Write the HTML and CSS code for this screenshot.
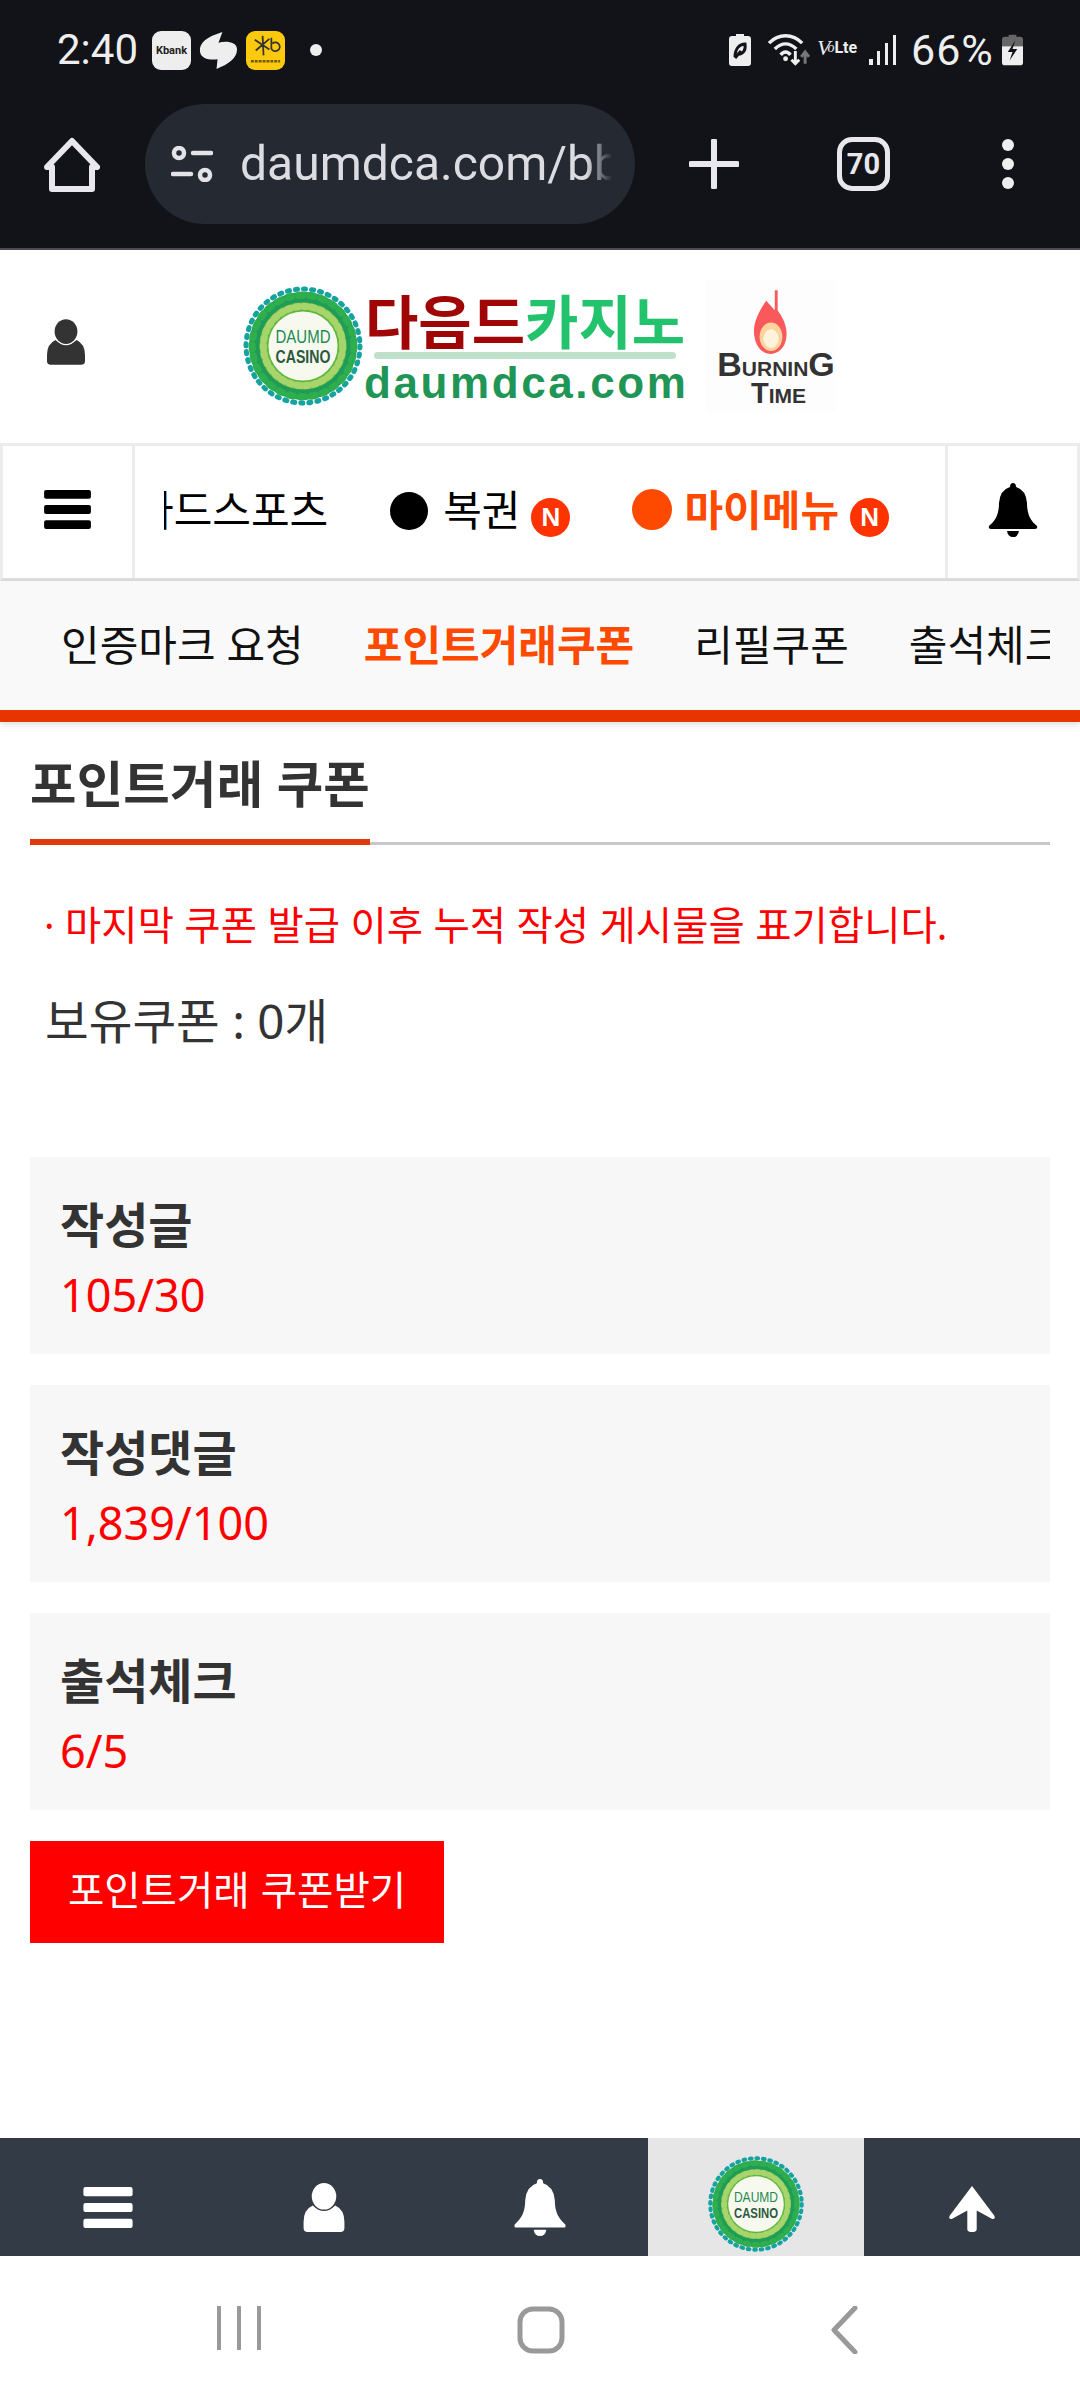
FILE: index.html
```html
<!DOCTYPE html>
<html lang="ko">
<head>
<meta charset="utf-8">
<title>포인트거래 쿠폰</title>
<link rel="stylesheet" href="styles.css">
</head>
<body>
<div class="phone">
  <div class="chrome">
    <div class="status">
      <div class="status-left">
        <span class="time">2:40</span>
        <span class="app app-k">Kbank</span>
        <svg class="app-s" viewBox="0 0 40 40"><path class="fill-e" d="M24 1 C8 6 0 12 1 21 C2 29 12 30 19 29 L18 39 C30 34 39 28 39 19 C39 11 28 10 20 12 Z"/></svg>
        <span class="app app-kb"><svg viewBox="0 0 40 40" class="kb-svg"><path class="kb-line" d="M9 9 L24 19 M24 8 L10 20 M17 5 L18 25 M26 7 V18 a4.500 4.500 0 1 0 1 -5"/><path class="kb-small" d="M5 31 H35"/></svg></span>
        <span class="dot"></span>
      </div>
      <div class="status-right">
        <svg class="ic-batt" viewBox="0 0 22 32"><path class="fill-e" d="M7 0 H15 V2 H19 Q22 2 22 5 V29 Q22 32 19 32 H3 Q0 32 0 29 V5 Q0 2 3 2 H7 Z"/><path class="leaf" d="M6 23 C6 14 11 10 16 10 C17 16 14 21 8 20 M6 24 L12 17"/></svg>
        <svg class="ic-wifi" viewBox="0 0 44 33"><path class="wifi-l" d="M2 10 C12 0 26 0 36 10 M8 16 C15 9 23 9 30 16 M14 22 C17 18 21 18 24 22"/><circle class="fill-e" cx="19" cy="26" r="2.500"/><path class="wifi-a" d="M29 18 V31 M25 27 L29 31 L33 27"/><path class="wifi-b" d="M39 31 V20 M35 24 L39 19 L43 24"/></svg>
        <span class="volte"><i>V</i><i class="small">o</i><b>Lte</b></span>
        <svg class="ic-signal" viewBox="0 0 28 30"><rect class="fill-e" x="0" y="24" width="4" height="6"/><rect class="fill-e" x="8" y="16" width="3" height="14"/><rect class="fill-e" x="16" y="8" width="3" height="22"/><rect class="fill-e" x="24" y="0" width="3" height="30"/></svg>
        <span class="pct">66%</span>
        <svg class="ic-batt2" viewBox="0 0 22 32"><path class="fill-g" d="M7 0 H15 V2 H19 Q22 2 22 5 V12 H0 V5 Q0 2 3 2 H7 Z"/><path class="fill-e" d="M0 12 H22 V29 Q22 32 19 32 H3 Q0 32 0 29 Z"/><path class="bolt" d="M14 6 L6 18 H11 L8 27 L16 15 H11 Z"/></svg>
      </div>
    </div>
    <div class="toolbar">
      <svg class="ic-home" viewBox="0 0 56 56"><path class="tool-l" d="M28 4 L53 30 H48 V52 H8 V30 H3 Z"/></svg>
      <div class="urlbar">
        <svg class="ic-tune" viewBox="0 0 42 36"><circle class="tool-t" cx="8" cy="7" r="5"/><path class="tool-t" d="M22 7 H40 M2 28 H20"/><circle class="tool-t" cx="34" cy="29" r="5"/></svg>
        <span class="url">daumdca.com/bbs</span>
      </div>
      <svg class="ic-plus" viewBox="0 0 50 50"><path class="tool-l" d="M25 2 V48 M2 25 H48"/></svg>
      <span class="tabs">70</span>
      <svg class="ic-more" viewBox="0 0 14 50"><circle class="fill-e" cx="7" cy="6" r="6"/><circle class="fill-e" cx="7" cy="25" r="6"/><circle class="fill-e" cx="7" cy="44" r="6"/></svg>
    </div>
  </div>

  <main class="page">
    <header class="site-head">
      <svg class="ic-user" viewBox="0 0 40 48"><use href="#user"/></svg>
      <div class="logo">
        <svg class="wreath" viewBox="0 0 120 120"><use href="#wreath"/></svg>
        <div class="logo-text">
          <div class="logo-ko"><span class="ko-red">다음드</span><span class="ko-green">카지노</span></div>
          <div class="logo-rule"></div>
          <div class="logo-en">daumdca.com</div>
        </div>
        <div class="burning">
          <svg class="flame" viewBox="0 0 40 70">
            <path class="fl-a" d="M24 1 V22 L15 12 C4 28 0 40 3 52 C6 64 14 69 22 68 C32 66 38 56 36 42 C35 34 31 28 27 22 V1 Z"/>
            <ellipse class="fl-b" cx="20" cy="50" rx="12" ry="15"/>
            <ellipse class="fl-c" cx="20" cy="52" rx="8" ry="10"/>
          </svg>
          <div class="b-1"><span class="b-big">B</span>URNIN<span class="b-big">G</span></div>
          <div class="b-2"><span class="b-big2">T</span>IME</div>
        </div>
      </div>
    </header>

    <nav class="mainnav">
      <div class="cell cell-menu"><svg class="ic-bars" viewBox="0 0 48 40"><use href="#bars"/></svg></div>
      <div class="nav-scroll">
        <div class="nav-track">
          <span class="nav-item nav-first">다드스포츠</span>
          <span class="nav-item"><span class="bullet"></span>복권<span class="nbadge">N</span></span>
          <span class="nav-item nav-on"><span class="bullet bullet-on"></span>마이메뉴<span class="nbadge">N</span></span>
        </div>
      </div>
      <div class="cell cell-bell"><svg class="ic-bell" viewBox="0 0 50 54"><use href="#bell"/></svg></div>
    </nav>

    <div class="subnav">
      <div class="sub-track">
        <span class="sub-item">인증마크 요청</span>
        <span class="sub-item sub-on">포인트거래쿠폰</span>
        <span class="sub-item">리필쿠폰</span>
        <span class="sub-item">출석체크</span>
      </div>
    </div>

    <section class="content">
      <h1 class="title"><span>포인트거래 쿠폰</span></h1>
      <p class="note">· 마지막 쿠폰 발급 이후 누적 작성 게시물을 표기합니다.</p>
      <p class="held">보유쿠폰 : 0개</p>
      <div class="stats">
        <div class="stat"><div class="stat-k">작성글</div><div class="stat-v">105/30</div></div>
        <div class="stat"><div class="stat-k">작성댓글</div><div class="stat-v">1,839/100</div></div>
        <div class="stat"><div class="stat-k">출석체크</div><div class="stat-v">6/5</div></div>
      </div>
      <button class="cta">포인트거래 쿠폰받기</button>
    </section>
  </main>

  <div class="tabbar">
    <div class="tab"><svg class="t-bars" viewBox="0 0 48 40"><use href="#bars"/></svg></div>
    <div class="tab"><svg class="t-user" viewBox="0 0 40 48"><use href="#user"/></svg></div>
    <div class="tab"><svg class="t-bell" viewBox="0 0 50 54"><use href="#bell"/></svg></div>
    <div class="tab tab-logo"><svg class="t-wreath" viewBox="0 0 120 120"><use href="#wreath"/></svg></div>
    <div class="tab"><svg class="t-up" viewBox="0 0 50 50"><path d="M25 1 L49 33 Q50 37 46 36 L30 27 V47 Q30 50 25 50 Q20 50 20 47 V27 L4 36 Q0 37 1 33 Z"/></svg></div>
  </div>

  <div class="sysnav">
    <svg class="s-recent" viewBox="0 0 46 44"><path class="sys-l" d="M3 1 V43 M23 1 V43 M43 1 V43"/></svg>
    <svg class="s-home" viewBox="0 0 48 48"><rect class="sys-l2" x="3" y="3" width="42" height="42" rx="13"/></svg>
    <svg class="s-back" viewBox="0 0 28 48"><path class="sys-l2" d="M25 2 L4 24 L25 46"/></svg>
  </div>
</div>

<svg class="defs" aria-hidden="true">
  <defs>
    <g id="user"><ellipse cx="20" cy="13" rx="12" ry="13"/><path d="M9 22 Q20 33 31 22 Q40 26 40 38 V44 Q40 48 36 48 H4 Q0 48 0 44 V38 Q0 26 9 22 Z"/></g>
    <g id="bars"><rect x="0" y="0" width="48" height="9" rx="2"/><rect x="0" y="15.500" width="48" height="9" rx="2"/><rect x="0" y="31" width="48" height="9" rx="2"/></g>
    <g id="bell"><path d="M25 0 Q28 0 28 4 Q38 7 39 20 C39 32 43 38 49 43 Q50 46 47 46 H3 Q0 46 1 43 C7 38 11 32 11 20 Q12 7 22 4 Q22 0 25 0 Z"/><path d="M19 48 H31 Q30 54 25 54 Q20 54 19 48 Z"/></g>
    <g id="wreath">
      <circle cx="60" cy="60" r="53" class="wr-a"/>
      <circle cx="60" cy="60" r="56" class="wr-dash"/>
      <circle cx="60" cy="60" r="50" class="wr-dash2"/>
      <circle cx="60" cy="60" r="43" class="wr-b"/>
      <circle cx="60" cy="60" r="39" class="wr-dash3"/>
      <circle cx="60" cy="60" r="34" class="wr-c"/>
      <text x="60" y="57" textLength="54" lengthAdjust="spacingAndGlyphs" class="wr-t1">DAUMD</text>
      <text x="60" y="77" textLength="54" lengthAdjust="spacingAndGlyphs" class="wr-t2">CASINO</text>
    </g>
  </defs>
</svg>
</body>
</html>
```

FILE: styles.css
```css
* { box-sizing: border-box; }
html, body { margin: 0; padding: 0; }
body { font-family: "Noto Sans", "Noto Sans CJK KR", sans-serif; background: #fff; }
.phone { width: 1080px; height: 2400px; display: flex; flex-direction: column; overflow: hidden; background: #fff; }
.defs { display: none; }

.chrome { height: 250px; background: #111318; border-bottom: 2px solid #4a4b52; flex: none; }
.status { height: 100px; display: flex; justify-content: space-between; padding: 31px 57px 0 57px; }
.status-left { display: flex; align-items: flex-start; height: 40px; }
.time { font: 400 42px/38px Roboto, sans-serif; color: #eee; width: 95px; }
.app { width: 39px; height: 39px; border-radius: 9px; display: block; flex: none; }
.app-k { background: #eee; color: #222; font: 700 11px/39px Roboto, sans-serif; text-align: center; }
.app-s { width: 39px; height: 39px; margin: 0 8px; }
.app-kb { background: #fdc90f; }
.kb-svg { width: 39px; height: 39px; display: block; }
.kb-line { fill: none; stroke: #333; stroke-width: 1.800; }
.kb-small { fill: none; stroke: #6b5a10; stroke-width: 2.500; stroke-dasharray: 3 1; }
.dot { width: 12px; height: 12px; border-radius: 50%; background: #eee; margin: 13px 0 0 25px; }
.fill-e { fill: #eee; }
.fill-g { fill: #666; }
.status-right { display: flex; align-items: flex-start; height: 40px; }
.ic-batt { width: 22px; height: 32px; margin: 3px 0 0 0; }
.leaf { fill: none; stroke: #111318; stroke-width: 3; }
.ic-wifi { width: 43px; height: 33px; margin: 2px 0 0 16px; }
.wifi-l { fill: none; stroke: #eee; stroke-width: 3.500; }
.wifi-a { fill: none; stroke: #eee; stroke-width: 3; }
.wifi-b { fill: none; stroke: #777; stroke-width: 3; }
.volte { color: #eee; width: 40px; margin-left: 7px; font: 400 13px/34px "Liberation Serif", serif; white-space: nowrap; height: 34px; display: flex; align-items: center; }
.volte i { font-size: 22px; letter-spacing: -3px; }
.volte i.small { font-size: 14px; letter-spacing: 0; }
.volte b { font: 700 16px/34px Roboto, sans-serif; }
.ic-signal { width: 28px; height: 30px; margin: 4px 0 0 12px; }
.pct { font: 400 43px/38px Roboto, sans-serif; color: #eee; margin-left: 14px; width: 84px; letter-spacing: 1px; white-space: nowrap; }
.ic-batt2 { width: 21px; height: 32px; margin: 3px 0 0 7px; }
.bolt { fill: #111318; }

.toolbar { height: 148px; display: flex; align-items: flex-start; }
.ic-home { width: 56px; height: 56px; margin: 37px 0 0 44px; flex: none; }
.tool-l { fill: none; stroke: #e8e8ec; stroke-width: 6; stroke-linecap: round; stroke-linejoin: round; }
.tool-t { fill: none; stroke: #e3e3e8; stroke-width: 4.500; stroke-linecap: round; }
.urlbar { width: 490px; height: 120px; margin: 4px 0 0 45px; border-radius: 60px; background: #252932; display: flex; align-items: center; padding: 0 22px 0 26px; flex: none; }
.ic-tune { width: 42px; height: 36px; flex: none; }
.url { font: 400 48px/60px Roboto, sans-serif; color: #dcdde2; margin-left: 27px; width: 372px; overflow: hidden; white-space: nowrap; display: block; mask-image: linear-gradient(90deg, #000 93%, transparent); }
.ic-plus { width: 50px; height: 50px; margin: 39px 0 0 54px; flex: none; }
.tabs { width: 53px; height: 54px; margin: 37px 0 0 98px; border: 5px solid #e8e8ec; border-radius: 15px; color: #e8e8ec; font: 700 29px/44px Roboto, sans-serif; text-align: center; flex: none; }
.ic-more { width: 14px; height: 50px; margin: 39px 0 0 111px; flex: none; }

.page { flex: 1; min-height: 0; display: flex; flex-direction: column; }
.site-head { height: 193px; position: relative; flex: none; display: flex; }
.ic-user { position: absolute; left: 47px; top: 69px; width: 38px; height: 46px; fill: #333; }
.logo { display: flex; margin-left: 242px; padding-top: 35px; }
.wreath { width: 122px; height: 122px; flex: none; }
.wr-a { fill: #1f9b5a; }
.wr-dash { fill: none; stroke: #14a3a0; stroke-width: 5; stroke-linecap: round; stroke-dasharray: 2 6; }
.wr-dash2 { fill: none; stroke: #2fae4e; stroke-width: 7; stroke-linecap: round; stroke-dasharray: 4 7; }
.wr-b { fill: #5fb83e; }
.wr-dash3 { fill: none; stroke: #a8d46c; stroke-width: 7; stroke-linecap: round; stroke-dasharray: 3 5; }
.wr-c { fill: #f8f9ee; }
.wr-t1 { font: 400 18px "Liberation Sans", sans-serif; fill: #1d8a52; text-anchor: middle; }
.wr-t2 { font: 700 18px "Liberation Sans", sans-serif; fill: #2d5a3f; text-anchor: middle; }
.logo-text { width: 324px; }
.logo-ko { height: 60px; margin-top: 4px; font-weight: 700; font-size: 58px; line-height: 60px; white-space: nowrap; padding-left: 1px; font-family: "Noto Sans CJK KR", sans-serif; }
.ko-red { color: #a10606; }
.ko-green { color: #22c36c; }
.logo-rule { height: 7px; width: 302px; margin: 3px 0 0 10px; border-radius: 4px; background: #bfe0cb; }
.logo-en { font: 700 44px/48px "Liberation Sans", sans-serif; color: #1f9655; letter-spacing: 2.600px; white-space: nowrap; margin-top: 0; }
.burning { width: 130px; height: 132px; margin: -5px 0 0 18px; display: flex; flex-direction: column; align-items: center; background: #fdfdfd; flex: none; }
.flame { width: 38px; height: 67px; margin-top: 9px; flex: none; }
.fl-a { fill: #f9595b; }
.fl-b { fill: #ffd39d; }
.fl-c { fill: #fff3dc; }
.b-1, .b-2 { font: 700 21px "Liberation Sans", sans-serif; color: #333; white-space: nowrap; }
.b-1 { line-height: 35px; margin: -9px 0 0 10px; }
.b-2 { line-height: 24px; margin: -5px 0 0 15px; }
.b-big { font-size: 34px; }
.b-big2 { font-size: 29px; }

.mainnav { height: 138px; flex: none; display: flex; border: 3px solid #ececec; border-bottom-color: #ddd; background: #fff; }
.cell { display: flex; align-items: center; justify-content: center; flex: none; }
.cell-menu { width: 132px; padding: 0 0 5px; border-right: 3px solid #ececec; }
.ic-bars { width: 47px; height: 39px; fill: #000; }
.nav-scroll { width: 810px; flex: none; padding-left: 29px; }
.nav-track { display: flex; align-items: flex-start; gap: 62px; height: 100%; padding-top: 34px; overflow: hidden; }
.nav-item { font-size: 42px; line-height: 60px; color: #000; white-space: nowrap; display: flex; flex: none; }
.nav-first { margin-left: -29px; }
.bullet { width: 38px; height: 38px; border-radius: 50%; background: #000; margin: 12px 15px 0 0; flex: none; }
.bullet-on { width: 40px; height: 41px; background: #fe4a00; margin: 9px 12px 0 0; }
.nav-on { color: #fe4a00; font-weight: 700; }
.nbadge { width: 39px; height: 39px; border-radius: 50%; background: #fe3300; color: #fff; font: 700 26px/39px "Liberation Sans", sans-serif; text-align: center; margin: 18px 0 0 11px; flex: none; }
.cell-bell { border-left: 3px solid #ececec; padding-bottom: 4px; flex: 1; }
.ic-bell { width: 50px; height: 54px; fill: #000; }

.subnav { height: 141px; flex: none; background: #f9f9f9; border-bottom: 12px solid #e73400; box-shadow: 0 3px 6px rgba(0, 0, 0, .12); padding: 0 30px 0 61px; overflow: hidden; position: relative; }
.sub-track { display: flex; width: 989px; gap: 60px; overflow: hidden; white-space: nowrap; height: 129px; align-items: flex-start; padding-top: 34px; }
.sub-item { font-size: 42px; line-height: 60px; color: #111; flex: none; }
.sub-on { color: #fe4a00; font-weight: 700; }

.content { flex: 1; min-height: 0; padding: 0 30px; }
.title { margin: 0; height: 123px; border-bottom: 3px solid #c8c8c8; font-size: 50.500px; font-weight: 700; line-height: 66px; color: #333; letter-spacing: 0.2px; display: flex; padding-top: 29px; }
.title span { display: block; height: 94px; border-bottom: 6px solid #e03a0c; }
.note { margin: 52px 0 0 14px; font-size: 39.400px; line-height: 56px; color: #f00; letter-spacing: 0.1px; white-space: nowrap; }
.held { margin: 36px 0 0 15px; font-size: 47.500px; line-height: 64px; color: #333; }
.stats { margin-top: 104px; display: flex; flex-direction: column; gap: 31px; }
.stat { height: 197px; background: #f7f7f7; padding: 35px 30px 0; }
.stat-k { font-size: 48px; font-weight: 700; line-height: 66px; color: #333; }
.stat-v { font-size: 45px; line-height: 60px; color: #f00; margin-top: 7px; }
.cta { display: block; margin-top: 31px; width: 414px; height: 102px; border: 0; background: #f00; color: #fff; font: 400 39.500px/56px "Noto Sans CJK KR", sans-serif; padding: 0 0 9px; }

.tabbar { height: 118px; flex: none; display: flex; background: #323b46; }
.tab { width: 216px; display: flex; align-items: flex-start; justify-content: center; flex: 1; }
.t-bars { width: 50px; height: 41px; margin-top: 49px; fill: #fff; }
.t-user { width: 42px; height: 49px; margin-top: 45px; fill: #fff; }
.t-bell { width: 54px; height: 57px; margin-top: 41px; fill: #fff; }
.t-up { width: 50px; height: 47px; margin-top: 47px; fill: #fff; }
.tab-logo { background: #e6e6e6; }
.t-wreath { width: 98px; height: 98px; margin-top: 17px; }

.sysnav { height: 144px; flex: none; position: relative; background: #fff; }
.sys-l { fill: none; stroke: #999; stroke-width: 4; stroke-linecap: round; }
.sys-l2 { fill: none; stroke: #999; stroke-width: 5; stroke-linecap: round; stroke-linejoin: round; }
.s-recent { position: absolute; left: 216px; top: 50px; width: 46px; height: 44px; }
.s-home { position: absolute; left: 517px; top: 50px; width: 48px; height: 48px; }
.s-back { position: absolute; left: 830px; top: 50px; width: 28px; height: 48px; }
```
